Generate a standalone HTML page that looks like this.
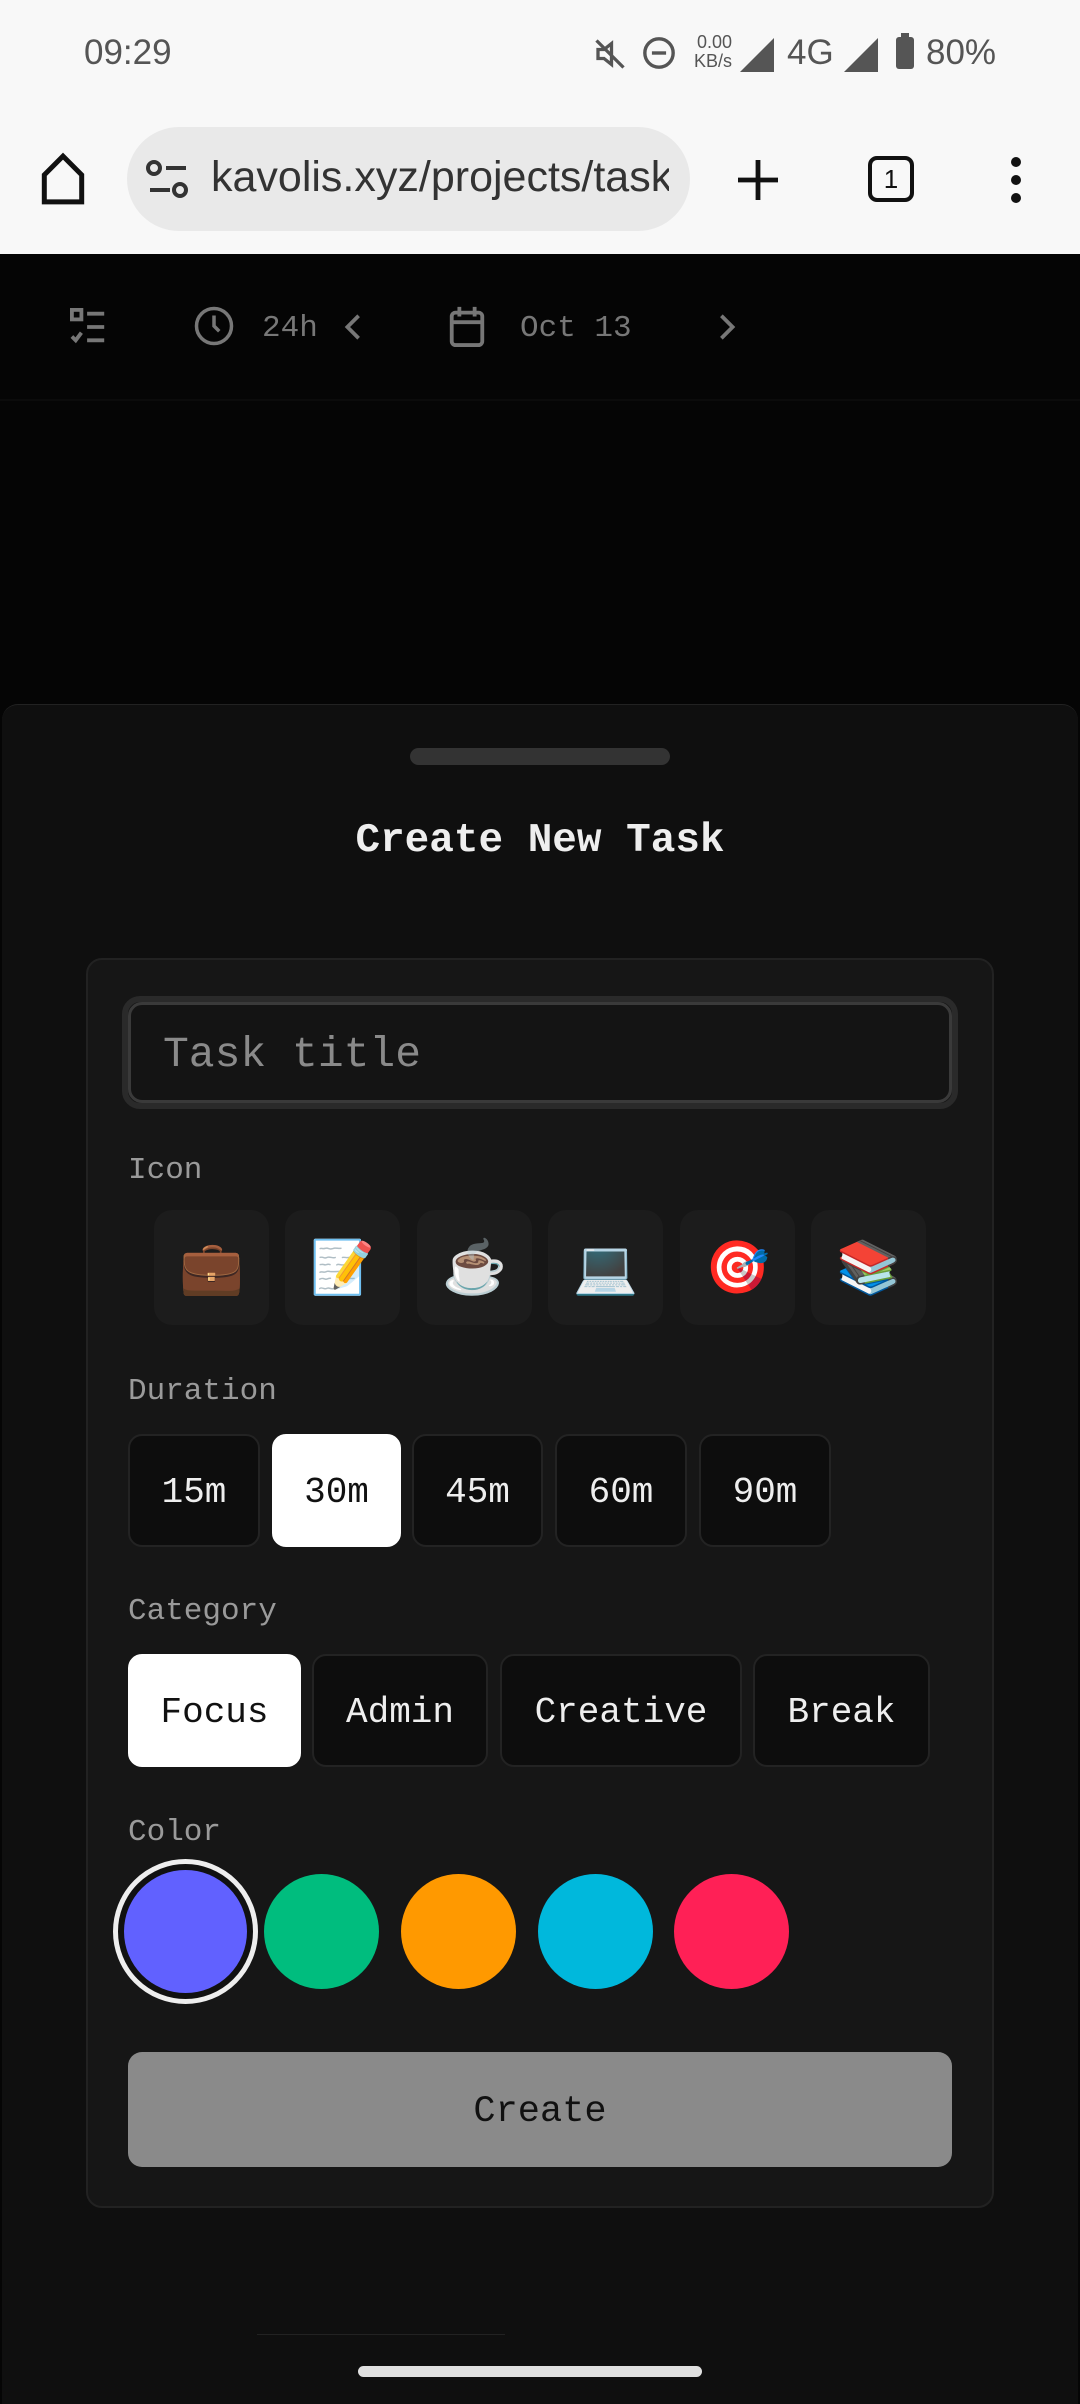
<!DOCTYPE html>
<html><head><meta charset="utf-8"><style>
*{box-sizing:border-box;margin:0;padding:0}
body{width:1080px;height:2400px;background:#050505;position:relative;overflow:hidden;font-family:"Liberation Mono",monospace}
.a{position:absolute}
.sb{font-family:"Liberation Sans",sans-serif;color:#555;font-size:35px}
.btn{position:absolute;background:#0d0d0d;border:2px solid #232323;border-radius:14px;color:#eee;font-size:36px;display:flex;align-items:center;justify-content:center;padding-top:4px}
.sel{background:#fff;color:#111;border-color:#fff}
.lbl{position:absolute;left:128px;color:#9a9a9a;font-size:31px}
.ic{position:absolute;top:1210px;width:115px;height:115px;background:#1c1c1c;border-radius:18px;display:flex;align-items:center;justify-content:center;font-size:52px;font-family:"Noto Color Emoji",sans-serif}
.c{position:absolute;top:1872px;width:115px;height:115px;border-radius:50%}
</style></head><body>
<div class="a" style="left:0;top:0;width:1080px;height:254px;background:#f8f8f8"></div>
<div class="a sb" style="left:84px;top:33px">09:29</div>
<svg class="a" style="left:592px;top:36px" width="36" height="36" viewBox="0 0 24 24" fill="none" stroke="#555" stroke-width="2.2"><path d="M4 9h4l5-4v14l-5-4H4z M3 3l18 18"/></svg>
<svg class="a" style="left:642px;top:36px" width="34" height="34" viewBox="0 0 24 24" fill="none" stroke="#555" stroke-width="2.4"><circle cx="12" cy="12" r="10"/><path d="M7 12h10"/></svg>
<div class="a" style="left:694px;top:33px;font-family:'Liberation Sans',sans-serif;font-size:18px;color:#555;line-height:19px;text-align:right">0.00<br>KB/s</div>
<svg class="a" style="left:740px;top:38px" width="34" height="34" viewBox="0 0 20 20"><path d="M20 0V20H0z" fill="#555"/></svg>
<div class="a sb" style="left:787px;top:33px">4G</div>
<svg class="a" style="left:844px;top:38px" width="34" height="34" viewBox="0 0 20 20"><path d="M20 0V20H0z" fill="#555"/></svg>
<div class="a" style="left:896px;top:37px;width:18px;height:32px;background:#555;border-radius:3px"></div>
<div class="a" style="left:901px;top:33px;width:8px;height:5px;background:#555"></div>
<div class="a sb" style="left:926px;top:33px">80%</div>
<svg class="a" style="left:38px;top:152px" width="50" height="54" viewBox="0 0 24 26" fill="none" stroke="#111" stroke-width="2.4"><path d="M3 11L12 2l9 9v13H3z"/></svg>
<div class="a" style="left:127px;top:127px;width:563px;height:104px;background:#e9e9e9;border-radius:52px"></div>
<svg class="a" style="left:146px;top:160px" width="44" height="40" viewBox="0 0 22 20" fill="none" stroke="#333" stroke-width="2"><circle cx="4" cy="4" r="3"/><path d="M10 4h10M2 15h10"/><circle cx="17" cy="15" r="3"/></svg>
<div class="a" style="left:211px;top:153px;width:458px;overflow:hidden;white-space:nowrap;font-family:'Liberation Sans',sans-serif;font-size:43px;color:#333">kavolis.xyz/projects/tasks</div>
<svg class="a" style="left:736px;top:158px" width="44" height="44" viewBox="0 0 22 22" stroke="#111" stroke-width="2.4"><path d="M11 1v20M1 11h20"/></svg>
<div class="a" style="left:868px;top:156px;width:46px;height:46px;border:4px solid #111;border-radius:9px;font-family:'Liberation Sans',sans-serif;font-size:26px;text-align:center;line-height:38px;color:#111">1</div>
<div class="a" style="left:1011px;top:157px;width:10px;height:10px;border-radius:5px;background:#111;box-shadow:0 18px 0 #111,0 36px 0 #111"></div>
<!-- toolbar -->
<svg class="a" style="left:70px;top:308px" width="38" height="38" viewBox="0 0 20 20" fill="none" stroke="#777" stroke-width="2"><rect x="1" y="1" width="5" height="5"/><path d="M9 3h9M9 10h9M9 17h9M1 15l2 2 3-4"/></svg>
<svg class="a" style="left:193px;top:305px" width="42" height="42" viewBox="0 0 24 24" fill="none" stroke="#777" stroke-width="2"><circle cx="12" cy="12" r="10"/><path d="M12 6v6l3 3"/></svg>
<div class="a" style="left:262px;top:311px;color:#777;font-size:31px">24h</div>
<svg class="a" style="left:343px;top:312px" width="20" height="30" viewBox="0 0 10 16" fill="none" stroke="#777" stroke-width="2"><path d="M8 2L2 8l6 6"/></svg>
<svg class="a" style="left:447px;top:305px" width="40" height="42" viewBox="0 0 20 22" fill="none" stroke="#777" stroke-width="2"><rect x="2" y="4" width="16" height="17" rx="2"/><path d="M2 9h16M6 1v5M14 1v5"/></svg>
<div class="a" style="left:520px;top:311px;color:#777;font-size:31px">Oct 13</div>
<svg class="a" style="left:717px;top:312px" width="20" height="30" viewBox="0 0 10 16" fill="none" stroke="#777" stroke-width="2"><path d="M2 2l6 6-6 6"/></svg>
<div class="a" style="left:0;top:399px;width:1080px;height:2px;background:#0b0b0b"></div>
<!-- sheet -->
<div class="a" style="left:2px;top:704px;width:1076px;height:1700px;background:#0f0f0f;border-radius:16px 16px 0 0;border-top:1px solid #222"></div>
<div class="a" style="left:410px;top:748px;width:260px;height:17px;background:#333;border-radius:9px"></div>
<div class="a" style="left:0;top:818px;width:1080px;text-align:center;color:#eee;font-size:41px;font-weight:bold">Create New Task</div>
<div class="a" style="left:86px;top:958px;width:908px;height:1250px;background:#161616;border:2px solid #222;border-radius:16px"></div>
<div class="a" style="left:122px;top:996px;width:836px;height:113px;border:6px solid #2a2a2a;border-radius:18px"></div>
<div class="a" style="left:128px;top:1002px;width:824px;height:101px;border:3px solid #3a3a3a;border-radius:14px;background:#141414;color:#8a8a8a;font-size:43px;padding-left:32px;line-height:100px">Task title</div>
<div class="lbl" style="top:1153px">Icon</div>
<div class="ic" style="left:154px">💼</div>
<div class="ic" style="left:285px">📝</div>
<div class="ic" style="left:417px">☕</div>
<div class="ic" style="left:548px">💻</div>
<div class="ic" style="left:680px">🎯</div>
<div class="ic" style="left:811px">📚</div>
<div class="lbl" style="top:1374px">Duration</div>
<div class="btn" style="left:128px;top:1434px;width:132px;height:113px">15m</div>
<div class="btn sel" style="left:272px;top:1434px;width:129px;height:113px">30m</div>
<div class="btn" style="left:412px;top:1434px;width:131px;height:113px">45m</div>
<div class="btn" style="left:555px;top:1434px;width:132px;height:113px">60m</div>
<div class="btn" style="left:699px;top:1434px;width:132px;height:113px">90m</div>
<div class="lbl" style="top:1594px">Category</div>
<div class="btn sel" style="left:128px;top:1654px;width:173px;height:113px">Focus</div>
<div class="btn" style="left:312px;top:1654px;width:176px;height:113px">Admin</div>
<div class="btn" style="left:500px;top:1654px;width:242px;height:113px">Creative</div>
<div class="btn" style="left:753px;top:1654px;width:177px;height:113px">Break</div>
<div class="lbl" style="top:1815px">Color</div>
<div class="c" style="left:113px;top:1859px;width:145px;height:145px;border:5px solid #eee;background:#111"></div>
<div class="c" style="left:124px;top:1870px;width:123px;height:123px;background:#6161ff"></div>
<div class="c" style="left:264px;top:1874px;background:#00bd7e"></div>
<div class="c" style="left:401px;top:1874px;background:#ff9900"></div>
<div class="c" style="left:538px;top:1874px;background:#00b8dc"></div>
<div class="c" style="left:674px;top:1874px;background:#ff2056"></div>
<div class="a" style="left:128px;top:2052px;width:824px;height:115px;background:#8a8a8a;border-radius:14px;color:#111;font-size:37px;text-align:center;line-height:120px">Create</div>
<div class="a" style="left:257px;top:2334px;width:248px;height:1px;background:#222"></div>
<div class="a" style="left:358px;top:2366px;width:344px;height:11px;background:#e0e0e0;border-radius:6px"></div>
</body></html>
